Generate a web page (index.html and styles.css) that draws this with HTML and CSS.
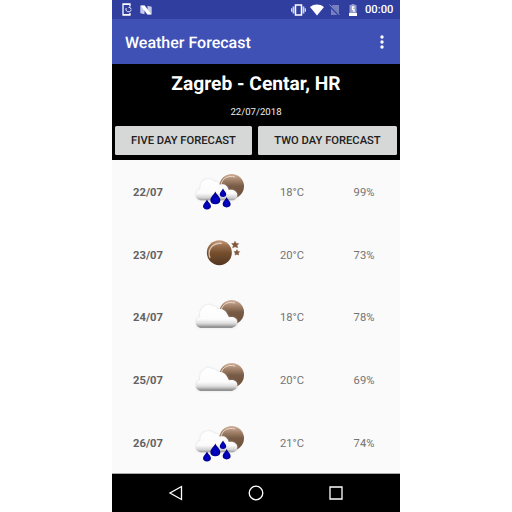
FILE: index.html
```html
<!DOCTYPE html>
<html lang="en">
<head>
<meta charset="utf-8">
<title>Weather Forecast</title>
<link rel="stylesheet" href="styles.css">
</head>
<body>
<svg class="defs" width="0" height="0" aria-hidden="true">
  <defs>
    <linearGradient id="moonFill" x1="0" y1="0" x2="0" y2="1">
      <stop offset="0" stop-color="#c49a7c"/>
      <stop offset=".22" stop-color="#9b7050"/>
      <stop offset=".5" stop-color="#76502f"/>
      <stop offset="1" stop-color="#54351f"/>
    </linearGradient>
    <linearGradient id="softMoon" x1="0" y1="0" x2="0" y2="1">
      <stop offset="0" stop-color="#d0b09a"/>
      <stop offset=".3" stop-color="#9a7a62"/>
      <stop offset=".5" stop-color="#775b46"/>
      <stop offset="1" stop-color="#6d5038"/>
    </linearGradient>
    <linearGradient id="cloudFill" gradientUnits="userSpaceOnUse" x1="0" y1="40" x2="0" y2="110">
      <stop offset="0" stop-color="#ffffff"/>
      <stop offset=".6" stop-color="#fcfcfc"/>
      <stop offset=".78" stop-color="#dedede"/>
      <stop offset=".9" stop-color="#a9a9a9"/>
      <stop offset="1" stop-color="#5c5c5c"/>
    </linearGradient>
    <linearGradient id="rainCloudFill" gradientUnits="userSpaceOnUse" x1="0" y1="40" x2="0" y2="106">
      <stop offset="0" stop-color="#ffffff"/>
      <stop offset=".65" stop-color="#fbfbfb"/>
      <stop offset=".85" stop-color="#d2d2d2"/>
      <stop offset="1" stop-color="#8c8c8c"/>
    </linearGradient>
    <radialGradient id="dropFill" cx=".5" cy=".62" r=".55">
      <stop offset="0" stop-color="#0808d8"/>
      <stop offset=".6" stop-color="#0000a8"/>
      <stop offset="1" stop-color="#000060"/>
    </radialGradient>
    <filter id="soft" x="-20%" y="-20%" width="140%" height="140%"><feGaussianBlur stdDeviation="1.5"/></filter>
    <filter id="edge" x="-20%" y="-20%" width="140%" height="140%"><feGaussianBlur stdDeviation="1"/></filter>
    <filter id="halo" x="-20%" y="-20%" width="140%" height="140%"><feGaussianBlur stdDeviation="3"/></filter>
    <path id="cloudShape" d="M47 108C37 107 32 100 33 91C34 82 39 77 46 75C43 63 47 51 57 46C61 39 73 37 82 43C90 43 96 47 100 53C108 49 121 55 125 64L132 77C144 73 156 79 157 89C158 98 151 107 141 108Z"/>
    <path id="rainCloudShape" d="M50 104C39 104 32 97 33 86C34 76 40 71 46 70C45 57 50 47 59 44C67 38 80 39 88 48C95 47 100 50 104 57C116 53 128 59 131 73C144 70 156 77 157 87C157 98 149 104 139 104Z"/>
    <path id="dropShape" d="M0-17C2-10 12-2 12 7C12 14 7 18 0 18S-12 14-12 7C-12-2-2-10 0-17Z"/>
    <g id="softMoonDisc">
      <circle cx="140" cy="62" r="37" fill="url(#softMoon)" filter="url(#edge)"/>
      <path d="M108 56C113 36 130 29 150 34" fill="none" stroke="#ecd9cb" stroke-width="3" filter="url(#soft)"/>
    </g>
    <g id="cloudMoon">
      <use href="#softMoonDisc"/>
      <use href="#cloudShape" fill="#b5b5b5" opacity=".5" filter="url(#halo)"/>
      <use href="#cloudShape" fill="url(#cloudFill)" filter="url(#edge)"/>
    </g>
    <g id="moon">
      <circle cx="103" cy="72" r="37.500" fill="url(#moonFill)" filter="url(#edge)"/>
      <path d="M75 88C65 61 84 42 111 44" fill="none" stroke="#f0dccd" stroke-width="4" opacity=".75" filter="url(#soft)"/>
      <path d="M150 38l3 6 8 1-5 5 2 7-8-3-7 3 2-7-5-5 7-1ZM156 63l2 5 6 1-4 4 1 6-5-2-6 2 1-6-4-4 6-1Z" fill="#7d563d" stroke="#8f6b54" stroke-width="2" filter="url(#edge)"/>
    </g>
    <g id="rain">
      <use href="#softMoonDisc"/>
      <use href="#rainCloudShape" fill="#b5b5b5" opacity=".5" filter="url(#halo)"/>
      <use href="#rainCloudShape" fill="url(#rainCloudFill)" filter="url(#edge)"/>
      <g fill="url(#dropFill)" filter="url(#edge)">
        <use href="#dropShape" transform="translate(66 116) scale(1 .86)"/>
        <use href="#dropShape" transform="translate(91 96) scale(1.25 1.08)"/>
        <use href="#dropShape" transform="translate(114 81) scale(.82 .72)"/>
        <use href="#dropShape" transform="translate(125 109) scale(1 .9)"/>
      </g>
    </g>
  </defs>
</svg>
<main class="phone">
  <div class="status">
    <svg class="status-icon device" viewBox="0 0 10 13"><path d="M8 3.500V1H1V12H8V10" fill="none" stroke="#fff" stroke-width="1.300"/><path d="M1 1.500H8M1 11.500H8" stroke="#fff" stroke-width="1.200"/><path d="M4.200 5A2.700 2.700 0 1 0 9.200 7M6.500 4.300A2.500 2.500 0 0 1 9.200 6.500" fill="none" stroke="#e6e8f7" stroke-width="1"/></svg>
    <svg class="status-icon nougat" viewBox="0 0 12 10"><path d="M.3.800H4.500V9.200L.3 8.300ZM7.500.8L11.700 1.700V9.200H7.500Z" fill="#c5caea"/><path d="M.5.600H4.700L11.500 9.400H7.300Z" fill="#fff"/></svg>
    <svg class="status-icon vibrate" viewBox="0 0 15 12"><path d="M4.500 1H10.500V11H4.500Z" fill="none" stroke="#fff" stroke-width="1.500"/><path d="M2.500 2.500V9.500M12.500 2.500V9.500" stroke="#c9cfee" stroke-width="1.800"/><path d="M.7 4.300V7.700M14.300 4.300V7.700" stroke="#dfe2f5" stroke-width="1.200"/></svg>
    <svg class="status-icon wifi" viewBox="0 0 14 12"><path d="M0 3C4-.3 10-.3 14 3L7 11.500Z" fill="#fff"/></svg>
    <svg class="status-icon sim" viewBox="0 0 11 12"><path d="M3.500 1H10V11H2V3Z" fill="#7680bf"/><path d="M0 1L10.500 11.700" stroke="#303f9f" stroke-width="2.200"/><path d="M.5.500L10.500 11" stroke="#8c95cb" stroke-width="1"/></svg>
    <svg class="status-icon battery" viewBox="0 0 8 12"><path d="M2.500 0H5.500V1H7.500V9H.5V1H2.500Z" fill="#949cce"/><path d="M0 9H8V12H0Z" fill="#fff"/><path d="M5.500 3H3.500V5.500H5V8" fill="none" stroke="#fff" stroke-width="1.300"/></svg>
    <span class="clock">00:00</span>
  </div>
  <header class="appbar">
    <h1>Weather Forecast</h1>
    <svg class="more" viewBox="0 0 4 14"><circle cx="2" cy="2" r="1.700"/><circle cx="2" cy="7" r="1.700"/><circle cx="2" cy="12" r="1.700"/></svg>
  </header>
  <section class="summary">
    <h2>Zagreb - Centar, HR</h2>
    <p>22/07/2018</p>
    <div class="buttons"><button>FIVE DAY FORECAST</button><button>TWO DAY FORECAST</button></div>
  </section>
  <section class="list">
    <div class="row"><b>22/07</b><svg viewBox="-3 4 216 150"><use href="#rain"/></svg><span>18°C</span><span>99%</span></div>
    <div class="row"><b>23/07</b><svg viewBox="-3 4 216 150"><use href="#moon"/></svg><span>20°C</span><span>73%</span></div>
    <div class="row"><b>24/07</b><svg viewBox="-3 4 216 150"><use href="#cloudMoon"/></svg><span>18°C</span><span>78%</span></div>
    <div class="row"><b>25/07</b><svg viewBox="-3 4 216 150"><use href="#cloudMoon"/></svg><span>20°C</span><span>69%</span></div>
    <div class="row"><b>26/07</b><svg viewBox="-3 4 216 150"><use href="#rain"/></svg><span>21°C</span><span>74%</span></div>
  </section>
  <nav class="navbar">
    <svg viewBox="0 0 16 16"><path d="M13.500 1.500V14.500L2 8Z"/></svg>
    <svg viewBox="0 0 16 16"><circle cx="8" cy="8" r="6.800"/></svg>
    <svg viewBox="0 0 16 16"><path d="M2 2H14V14H2Z"/></svg>
  </nav>
</main>
</body>
</html>
```
FILE: styles.css
```css
* { box-sizing: border-box; }
body { margin: 0; background: #fff; font-family: Roboto, sans-serif; text-rendering: geometricPrecision; }
h1, h2, p { margin: 0; }
svg { display: block; }
.defs { position: absolute; }
.phone { width: 288px; height: 512px; margin: 0 auto; display: flex; flex-direction: column; background: #fafafa; }
.status { height: 19px; flex: none; display: flex; align-items: center; background: #303f9f; padding: 0 6px 0 10px; }
.status-icon { flex: none; }
.device { width: 10px; height: 13px; }
.nougat { width: 12px; height: 10px; margin-left: 8px; }
.vibrate { width: 15px; height: 12px; margin-left: auto; }
.wifi { width: 14px; height: 12px; margin-left: 4px; }
.sim { width: 11px; height: 12px; margin-left: 5px; }
.battery { width: 8px; height: 12px; margin-left: 9px; }
.clock { width: 29px; margin-left: 8px; padding-top: 1px; font-size: 11.200px; line-height: 18px; font-weight: 500; color: #fff; white-space: nowrap; }
.appbar { height: 45px; flex: none; display: flex; align-items: center; justify-content: space-between; background: #3f51b5; padding: 0 16px 0 13px; }
.appbar h1 { color: #fff; font-size: 16px; line-height: 20px; font-weight: 500; padding-top: 2px; }
.more { width: 4px; height: 14px; fill: #fff; }
.summary { height: 96px; flex: none; background: #000; color: #fff; text-align: center; }
.summary h2 { font-size: 19.200px; line-height: 24px; font-weight: 700; padding-top: 8px; }
.summary p { font-size: 9.600px; line-height: 12px; margin-top: 11px; color: #f0f0f0; }
.buttons { display: grid; grid-template-columns: 137px 139px; column-gap: 6px; padding: 7px 3px 0; }
.buttons button { height: 29px; border: 0; border-radius: 1.500px; background: #d6d7d7; color: #202020; font: 500 11.200px/30px Roboto, sans-serif; text-rendering: inherit; padding: 0; white-space: nowrap; }
.list { height: 314px; flex: none; display: grid; grid-template-rows: repeat(5, 62.800px); padding-top: 1px; overflow: hidden; border-bottom: 1px solid #aaa; }
.row { display: grid; grid-template-columns: repeat(4, 72px); align-items: center; text-align: center; font-size: 11.200px; color: #737373; }
.row b { font-weight: 700; color: #626262; }
.row svg { width: 72px; height: 50px; }
.navbar { flex: 1; display: flex; align-items: center; justify-content: center; gap: 64px; background: #000; }
.navbar svg { width: 16px; height: 16px; fill: none; stroke: #fff; stroke-width: 1.300; }
```
